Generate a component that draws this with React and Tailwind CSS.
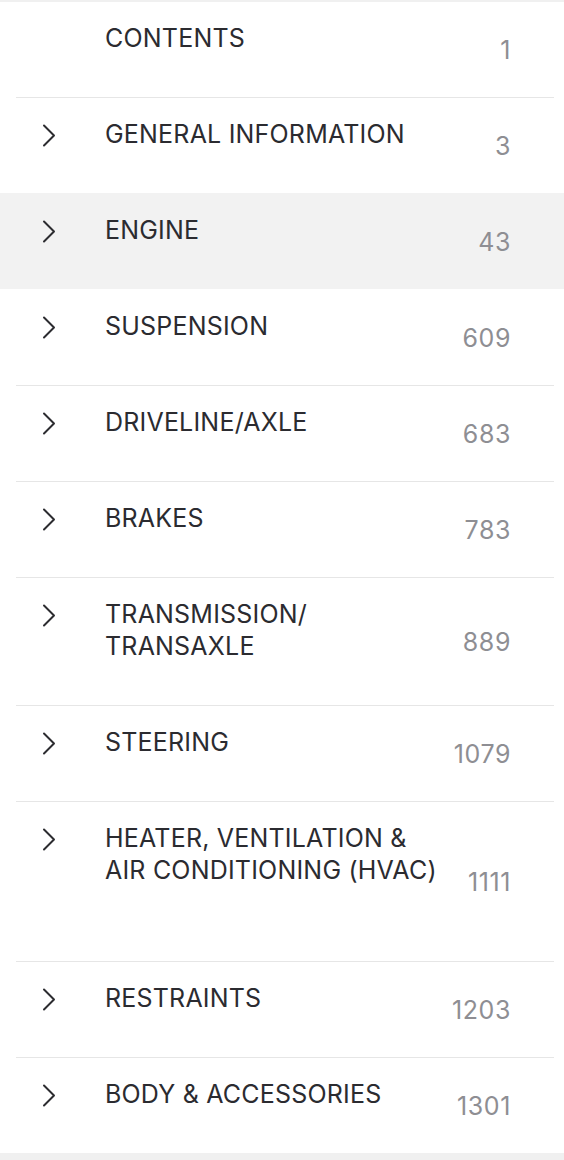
import React from "react";

const rows = [
  { title: ["CONTENTS"], page: "1", chevron: false, h: "h-[95px]", border: false },
  { title: ["GENERAL INFORMATION"], page: "3", h: "h-[95px]", border: true },
  { title: ["ENGINE"], page: "43", h: "h-[95px]", border: false, active: true },
  { title: ["SUSPENSION"], page: "609", h: "h-[95px]", border: false },
  { title: ["DRIVELINE/AXLE"], page: "683", h: "h-[95px]", border: true },
  { title: ["BRAKES"], page: "783", h: "h-[95px]", border: true },
  { title: ["TRANSMISSION/", "TRANSAXLE"], page: "889", h: "h-[127px]", border: true },
  { title: ["STEERING"], page: "1079", h: "h-[95px]", border: true },
  { title: ["HEATER, VENTILATION &", "AIR CONDITIONING (HVAC)"], page: "1111", h: "h-[159px]", border: true },
  { title: ["RESTRAINTS"], page: "1203", h: "h-[95px]", border: true },
  { title: ["BODY & ACCESSORIES"], page: "1301", h: "h-[95px]", border: true },
];

function Chevron() {
  return (
    <svg width="14" height="23" viewBox="0 0 14 23" fill="none" className="block">
      <path d="M2 1.5 L12 11.5 L2 21.5" stroke="#2c2c30" strokeWidth="2" strokeLinecap="round" strokeLinejoin="round" />
    </svg>
  );
}

export default function App() {
  return (
    <div className="min-h-screen w-[564px] bg-[#f0f0f0] pt-[2px]" style={{ fontFamily: "Inter, 'Liberation Sans', sans-serif" }}>
      <div className="bg-white">
        {rows.map((r, i) => (
          <div key={i} className={r.active ? "bg-[#f2f2f2]" : "bg-white"}>
            <div className={`ml-[16px] mr-[10px] ${i === 0 ? "" : r.border ? "border-t border-[#e6e6e6]" : "border-t border-transparent"}`}>
              <div className={`flex items-center ${r.h}`}>
                <div className="self-start pt-[21px] w-[89px] flex">
                  {r.chevron !== false && (
                    <div className="pl-[26px] pt-[5px]">
                      <Chevron />
                    </div>
                  )}
                </div>
                <div className="self-start pt-[20px] flex-1 text-[25px] leading-[32px] text-[#2b2b30] tracking-[0.2px]">
                  {r.title.map((t, j) => (
                    <div key={j}>{t}</div>
                  ))}
                </div>
                <div className="pr-[43px] text-[25px] leading-[32px] text-[#8e8e93] text-right tracking-[0.6px]">{r.page}</div>
              </div>
            </div>
          </div>
        ))}
      </div>
    </div>
  );
}
